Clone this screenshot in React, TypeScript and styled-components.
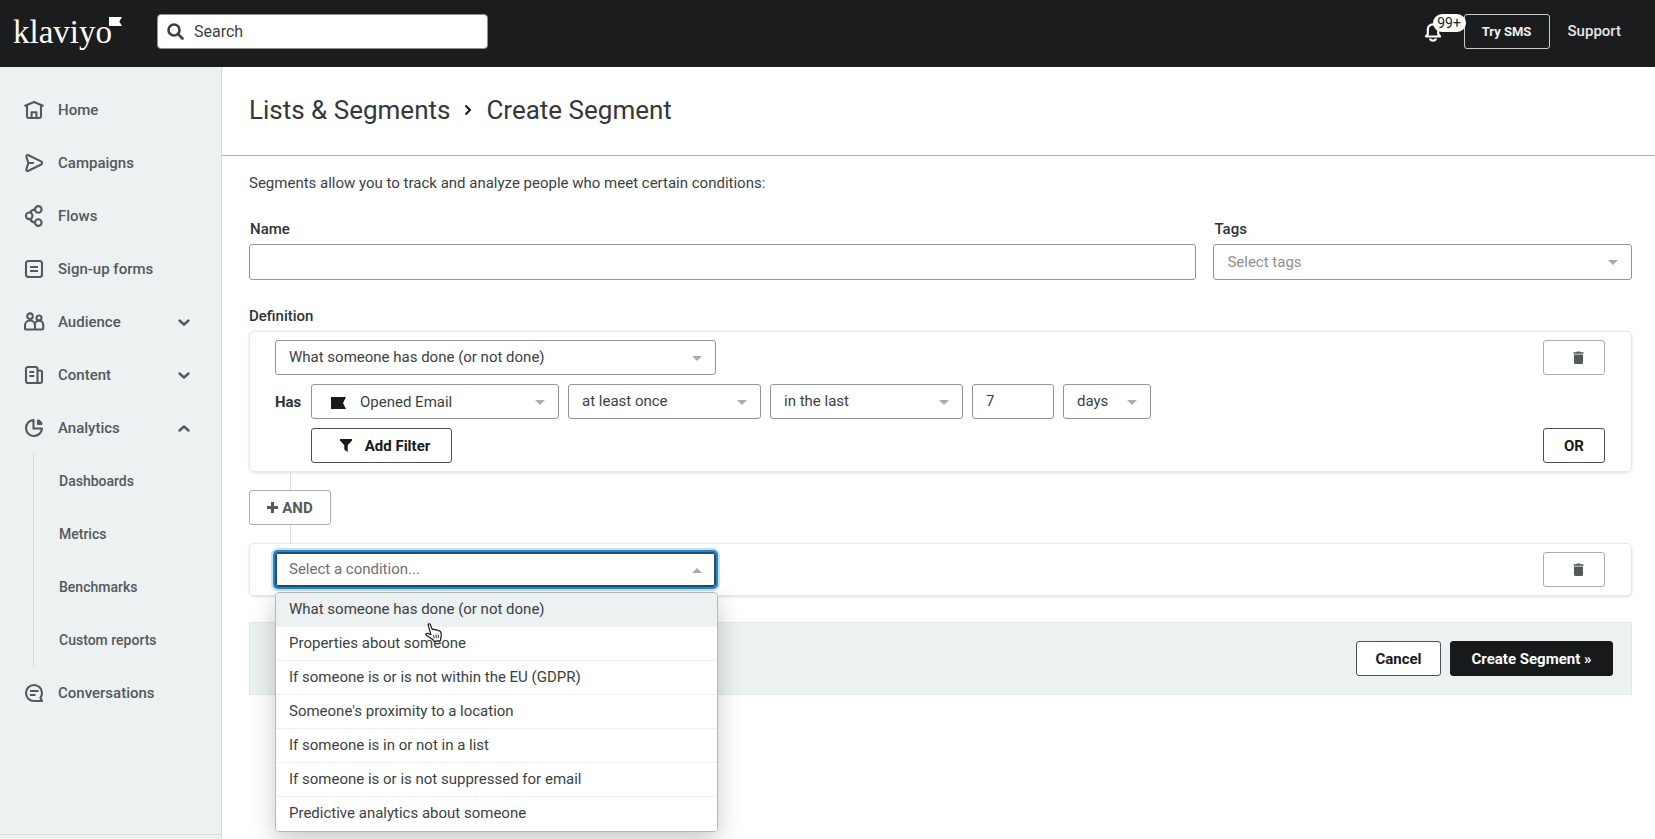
import React, { useState } from "react";
import styled, { createGlobalStyle, css } from "styled-components";

const GlobalStyle = createGlobalStyle`
  *, *::before, *::after { box-sizing: border-box; }
  body { margin: 0; background: #fff; }
  body, button, input, select {
    font-family: Roboto, "Liberation Sans", sans-serif;
    font-size: 15px;
    color: #3b3f42;
  }
`;

/* ---------- page frame ---------- */

const Page = styled.div`
  display: flex;
  flex-direction: column;
  min-height: 100vh;
`;

const TopBar = styled.header`
  display: flex;
  align-items: flex-start;
  height: 67px;
  padding: 14px 34px 0 13px;
  background: #1b1c1e;
`;

const Logo = styled.a`
  display: flex;
  align-items: flex-start;
  width: 144px;
  color: #fff;
  font-family: "Liberation Serif", serif;
  font-size: 33px;
  line-height: 36px;
  text-decoration: none;

  svg { margin: 3px 0 0 -3px; }
`;

const SearchBox = styled.label`
  display: flex;
  align-items: center;
  gap: 10px;
  flex: 0 1 331px;
  height: 35px;
  padding: 0 9px;
  border: 1px solid #8d9192;
  border-radius: 4px;
  background: #fff;
`;

const SearchInput = styled.input`
  flex: 1;
  min-width: 0;
  padding: 0;
  border: 0;
  outline: 0;
  background: none;
  font-size: 16px;

  &::placeholder { color: #3b3f42; opacity: 1; }
`;

const TopActions = styled.div`
  display: flex;
  margin-left: auto;
`;

const Bell = styled.button`
  position: relative;
  width: 40px;
  height: 35px;
  padding: 0;
  border: 0;
  background: none;
  text-align: left;

  svg { display: block; }
`;

const Badge = styled.span`
  position: absolute;
  top: 0;
  left: 9px;
  z-index: 1;
  width: 33px;
  border-radius: 9px;
  background: #fff;
  color: #1b1c1e;
  font-size: 14px;
  line-height: 18px;
  text-align: center;
`;

const SmsButton = styled.button`
  width: 86px;
  height: 35px;
  padding: 0;
  border: 1px solid #c9cbcc;
  border-radius: 3px;
  background: none;
  color: #f0f0f0;
  font-size: 13px;
  font-weight: 700;
`;

const SupportLink = styled.a`
  margin-left: 18px;
  color: #e4e5e6;
  font-size: 15px;
  font-weight: 500;
  line-height: 34px;
  text-decoration: none;
`;

const Body = styled.div`
  display: flex;
  flex: 1;
`;

/* ---------- sidebar ---------- */

const Sidebar = styled.nav`
  display: flex;
  flex-direction: column;
  flex: 0 0 222px;
  padding-top: 16px;
  border-right: 1px solid #d5dadb;
  background: #ecf1f2;
`;

const NavList = styled.ul`
  margin: 0;
  padding: 0;
  list-style: none;
`;

const navEntry = css`
  display: flex;
  align-items: center;
  width: 100%;
  height: 53px;
  border: 0;
  background: none;
  color: #54595c;
  font-weight: 500;
  text-align: left;
  text-decoration: none;
`;

const NavLink = styled.a`
  ${navEntry}
  gap: 13px;
  padding: 0 32px 0 23px;
  font-size: 15px;
`;

const NavToggle = styled.button`
  ${navEntry}
  gap: 13px;
  padding: 0 30px 0 23px;
  font-size: 15px;

  svg:last-child { margin-left: auto; }
`;

const SubList = styled(NavList)`
  margin-left: 33px;
  border-left: 1px solid #d5dadb;
`;

const SubLink = styled.a`
  ${navEntry}
  padding-left: 25px;
  font-size: 14px;
`;

const SidebarFoot = styled.div`
  height: 5px;
  margin-top: auto;
  border-top: 1px solid #d5dadb;
`;

/* ---------- main column ---------- */

const Main = styled.main`
  flex: 1;
  min-width: 0;
`;

const TitleBar = styled.div`
  display: flex;
  align-items: center;
  gap: 14px;
  height: 89px;
  padding: 0 27px 2px;
  border-bottom: 1px solid #b0b4b6;
`;

const Title = styled.h1`
  margin: 0;
  color: #33373a;
  font-size: 26px;
  font-weight: 400;
  line-height: 32px;

  a { color: inherit; text-decoration: none; }
`;

const Form = styled.form`
  padding: 17px 23px 24px 27px;
`;

const Intro = styled.p`
  margin: 0 0 26px;
  line-height: 20px;
`;

const FieldGrid = styled.div`
  display: grid;
  grid-template-columns: 43fr 19fr;
  gap: 17px;
  margin-bottom: 26px;
`;

const Field = styled.div`
  display: flex;
  flex-direction: column;
  gap: 5px;
`;

const Label = styled.label<{ $inset?: boolean }>`
  padding-left: ${(p) => (p.$inset ? 1 : 0)}px;
  color: #2f3336;
  font-weight: 500;
  line-height: 20px;
`;

const SectionLabel = styled.h2`
  margin: 0 0 5px;
  color: #2f3336;
  font-size: 15px;
  font-weight: 500;
  line-height: 20px;
`;

const control = css`
  display: block;
  width: 100%;
  height: 35px;
  padding: 0 14px 1px 13px;
  border: 1px solid #929697;
  border-radius: 3px;
  background: #fff;
  outline: 0;
`;

const TextInput = styled.input<{ $width?: number; $tall?: boolean }>`
  ${control}
  ${(p) => p.$width && css`width: ${p.$width}px;`}
  ${(p) => p.$tall && css`height: 36px;`}
`;

const SelectBox = styled.div<{ $width?: number; $open?: boolean }>`
  position: relative;
  width: ${(p) => (p.$width ? `${p.$width}px` : "100%")};
  max-width: 100%;

  &::after {
    content: "";
    position: absolute;
    top: 50%;
    right: 14px;
    border: 5px solid transparent;
    border-top-color: #a9adae;
    margin-top: -2px;
    pointer-events: none;
    ${(p) => p.$open && css`
      margin-top: -7px;
      border-top-color: transparent;
      border-bottom-color: #a9adae;
    `}
  }
`;

const Select = styled.select<{ $muted?: boolean; $tall?: boolean; $icon?: boolean; $open?: boolean }>`
  ${control}
  appearance: none;
  color: ${(p) => (p.$muted ? "#8d9192" : "#3b3f42")};
  ${(p) => p.$tall && css`height: 36px;`}
  ${(p) => p.$icon && css`padding: 1px 14px 0 48px;`}
  ${(p) => p.$open && css`
    border-color: #1c4f72;
    color: #6c7173;
    box-shadow: inset 0 0 0 1px #1c4f72, 0 0 0 2px #2d85bd, 0 0 0 4px #c3e3f5;
  `}
`;

const SelectIcon = styled.span`
  position: absolute;
  top: 13px;
  left: 20px;
  pointer-events: none;

  svg { display: block; }
`;

const Card = styled.section`
  display: flex;
  flex-direction: column;
  gap: 9px;
  padding: 8px 26px 8px 25px;
  border: 1px solid #e6e9ea;
  border-radius: 5px;
  box-shadow: 0 1px 3px rgba(0, 0, 0, 0.12);
`;

const Row = styled.div`
  display: flex;
  align-items: center;
  gap: 9px;
`;

const Verb = styled.span`
  width: 27px;
  color: #2f3336;
  font-weight: 700;
`;

const Spacer = styled.div`
  flex: 1;
`;

const Indent = styled.div`
  width: 27px;
`;

const Button = styled.button<{ $width: number; $tone?: "quiet" | "solid" }>`
  display: flex;
  align-items: center;
  justify-content: center;
  flex: 0 0 ${(p) => p.$width}px;
  width: ${(p) => p.$width}px;
  height: 35px;
  padding: 0;
  border: 1px solid #4b4f51;
  border-radius: 3px;
  background: #fff;
  color: #17191b;
  font-weight: 700;
  white-space: nowrap;

  ${(p) => p.$tone === "quiet" && css`
    border-color: #aaaeaf;
    color: #54595c;
  `}
  ${(p) => p.$tone === "solid" && css`
    border-color: #17191b;
    background: #17191b;
    color: #fff;
  `}
`;

const FilterButton = styled(Button)`
  gap: 13px;
  padding-left: 7px;
`;

const AndButton = styled(Button)`
  gap: 4px;
`;

const TrashButton = styled(Button)`
  padding-left: 9px;
`;

const Stub = styled.div`
  width: 1px;
  height: 18px;
  margin-left: 41px;
  background: #dcdfe0;
`;

const Menu = styled.ul`
  position: absolute;
  top: 40px;
  left: 0;
  z-index: 2;
  width: 443px;
  margin: 0;
  padding: 0;
  border: 1px solid #b3b8b9;
  border-radius: 4px;
  background: #fff;
  box-shadow: 0 8px 24px rgba(0, 0, 0, 0.22);
  list-style: none;
  overflow: hidden;
`;

const MenuItem = styled.li<{ $active: boolean }>`
  height: 34px;
  padding: 0 13px;
  border-bottom: 1px solid #eef0f1;
  background: ${(p) => (p.$active ? "#ecf1f2" : "#fff")};
  line-height: 33px;
  cursor: pointer;

  &:last-child { border-bottom: 0; }
`;

const Pointer = styled.svg`
  position: absolute;
  top: 71px;
  left: 150px;
  z-index: 3;
  pointer-events: none;
`;

const Footer = styled.div`
  display: flex;
  justify-content: flex-end;
  gap: 9px;
  margin-top: 26px;
  padding: 18px;
  border: 1px solid #e1e6e7;
  background: #ecf1f2;
`;

/* ---------- icons ---------- */

const iconPaths = {
  home: (
    <>
      <path d="M1.500 7 11 3l9.500 4M4 6.500V17a2 2 0 0 0 2 2h10a2 2 0 0 0 2-2V6.500" />
      <path d="M8.600 19v-5.800h4.800V19" />
    </>
  ),
  campaigns: (
    <path d="M5.400 11 3.400 5.200C2.900 3.500 4 2.500 5.500 3.200l12.600 6.200c1.300.7 1.300 2.400 0 3.100L5.500 18.800c-1.500.7-2.600-.4-2.100-2L5.400 11h5.400" />
  ),
  flows: (
    <>
      <circle cx="15.300" cy="4.400" r="3.300" />
      <circle cx="6.200" cy="10.800" r="3.300" />
      <circle cx="15.300" cy="17.600" r="3.300" />
      <path d="M7.200 7.600C8 5.600 9.600 4.600 12 4.400M7.200 14c.8 2 2.400 3.300 4.800 3.600" />
    </>
  ),
  forms: (
    <>
      <rect x="3" y="3" width="16" height="16" rx="2.500" />
      <path d="M7 9h8M7 13h8" />
    </>
  ),
  audience: (
    <>
      <circle cx="7" cy="5.200" r="2.800" />
      <circle cx="16" cy="7" r="2.500" />
      <path d="M12 18.500H3a1 1 0 0 1-1-1v-3a5 5 0 0 1 10 0ZM12 18.500h7.200a1 1 0 0 0 1-1V14a4 4 0 0 0-8.200-.5" />
    </>
  ),
  content: (
    <>
      <path d="M14.500 19H5a2 2 0 0 1-2-2V5a2 2 0 0 1 2-2h7.500a2 2 0 0 1 2 2v14ZM14.500 6.500H17a2 2 0 0 1 2 2V17a2 2 0 0 1-2 2h-2.500" />
      <path d="M6.300 8h5M6.300 12h5" />
    </>
  ),
  analytics: (
    <>
      <path d="M10.500 3A8 8 0 1 0 19 11.500h-8.500V3Z" />
      <path d="M15 3.500A4.500 4.500 0 0 1 18.500 7H15Z" fill="currentColor" />
    </>
  ),
  conversations: (
    <>
      <path d="M19 19h-8a8 8 0 1 1 8-8c0 2.300-.9 4-1.600 5Z" />
      <path d="M7 9h8.500M7 13h5.500" />
    </>
  ),
};

type IconName = keyof typeof iconPaths;

const NavIcon = ({ name }: { name: IconName }) => (
  <svg width="22" height="22" viewBox="0 0 22 22" fill="none" stroke="currentColor" strokeWidth="2.100" strokeLinejoin="round" aria-hidden="true">
    {iconPaths[name]}
  </svg>
);

const Chevron = ({ up }: { up?: boolean }) => (
  <svg width="14" height="14" viewBox="0 0 14 14" fill="none" stroke="currentColor" strokeWidth="2.400" strokeLinecap="round" strokeLinejoin="round" aria-hidden="true">
    <path d={up ? "M2.500 9.500 7 5.500l4.500 4" : "M2.500 5.500 7 9.500l4.500-4"} />
  </svg>
);

const TrashIcon = () => (
  <svg width="11" height="13" viewBox="0 0 11 13" fill="currentColor" aria-hidden="true">
    <path d="M1 3.600h9v7.900A1.500 1.500 0 0 1 8.500 13h-6A1.500 1.500 0 0 1 1 11.500ZM.5 1.300h2.800L4 .5h3l.7.800h2.800v1.500H.5Z" />
  </svg>
);

/* ---------- data ---------- */

const navItems: { name: IconName; label: string; toggle?: "open" | "closed"; children?: string[] }[] = [
  { name: "home", label: "Home" },
  { name: "campaigns", label: "Campaigns" },
  { name: "flows", label: "Flows" },
  { name: "forms", label: "Sign-up forms" },
  { name: "audience", label: "Audience", toggle: "closed" },
  { name: "content", label: "Content", toggle: "closed" },
  { name: "analytics", label: "Analytics", toggle: "open", children: ["Dashboards", "Metrics", "Benchmarks", "Custom reports"] },
  { name: "conversations", label: "Conversations" },
];

const conditions = [
  "What someone has done (or not done)",
  "Properties about someone",
  "If someone is or is not within the EU (GDPR)",
  "Someone's proximity to a location",
  "If someone is in or not in a list",
  "If someone is or is not suppressed for email",
  "Predictive analytics about someone",
];

export default function App() {
  const [active, setActive] = useState(0);
  const [days, setDays] = useState("7");

  return (
    <Page>
      <GlobalStyle />
      <TopBar>
        <Logo href="#">
          klaviyo
          <svg width="13" height="9" viewBox="0 0 13 9" fill="currentColor" aria-hidden="true">
            <path d="M0 0h13l-2.700 4.500L13 9H0Z" />
          </svg>
        </Logo>
        <SearchBox>
          <svg width="17" height="17" viewBox="0 0 17 17" fill="none" stroke="#3b3f42" strokeWidth="2.600" strokeLinecap="round" aria-hidden="true">
            <circle cx="7" cy="7" r="5.500" />
            <path d="m11.300 11.300 4.200 4.200" />
          </svg>
          <SearchInput type="search" placeholder="Search" aria-label="Search" />
        </SearchBox>
        <TopActions>
          <Bell type="button" aria-label="Notifications">
            <svg width="18" height="35" viewBox="0 0 18 35" fill="none" stroke="#fff" strokeWidth="2.200" strokeLinejoin="round" aria-hidden="true">
              <path d="M3.800 20v-4.500a5.200 5.200 0 0 1 10.400 0V20l1.800 2.500H2ZM6 24.500c.7 2.800 5.300 2.800 6 0" />
            </svg>
            <Badge>99+</Badge>
          </Bell>
          <SmsButton type="button">Try SMS</SmsButton>
          <SupportLink href="#">Support</SupportLink>
        </TopActions>
      </TopBar>

      <Body>
        <Sidebar aria-label="Main">
          <NavList>
            {navItems.map((item) => (
              <li key={item.label}>
                {item.toggle ? (
                  <NavToggle type="button" aria-expanded={item.toggle === "open"}>
                    <NavIcon name={item.name} />
                    {item.label}
                    <Chevron up={item.toggle === "open"} />
                  </NavToggle>
                ) : (
                  <NavLink href="#">
                    <NavIcon name={item.name} />
                    {item.label}
                  </NavLink>
                )}
                {item.children && (
                  <SubList>
                    {item.children.map((child) => (
                      <li key={child}>
                        <SubLink href="#">{child}</SubLink>
                      </li>
                    ))}
                  </SubList>
                )}
              </li>
            ))}
          </NavList>
          <SidebarFoot />
        </Sidebar>

        <Main>
          <TitleBar>
            <Title as="div">
              <a href="#">Lists &amp; Segments</a>
            </Title>
            <svg width="8" height="12" viewBox="0 0 8 12" fill="none" stroke="#17191b" strokeWidth="2" aria-hidden="true">
              <path d="m1.500 1.500 4.500 4.500-4.500 4.500" />
            </svg>
            <Title>Create Segment</Title>
          </TitleBar>

          <Form onSubmit={(e) => e.preventDefault()}>
            <Intro>Segments allow you to track and analyze people who meet certain conditions:</Intro>

            <FieldGrid>
              <Field>
                <Label htmlFor="name" $inset>Name</Label>
                <TextInput id="name" type="text" $tall />
              </Field>
              <Field>
                <Label htmlFor="tags" $inset>Tags</Label>
                <SelectBox>
                  <Select id="tags" $muted $tall>
                    <option>Select tags</option>
                  </Select>
                </SelectBox>
              </Field>
            </FieldGrid>

            <SectionLabel>Definition</SectionLabel>
            <Card>
              <Row>
                <SelectBox $width={441}>
                  <Select aria-label="Condition">
                    {conditions.map((c) => <option key={c}>{c}</option>)}
                  </Select>
                </SelectBox>
                <Spacer />
                <TrashButton type="button" $width={62} $tone="quiet" aria-label="Delete condition">
                  <TrashIcon />
                </TrashButton>
              </Row>
              <Row>
                <Verb>Has</Verb>
                <SelectBox $width={248}>
                  <Select aria-label="Metric" $icon>
                    <option>Opened Email</option>
                  </Select>
                  <SelectIcon>
                    <svg width="15" height="12" viewBox="0 0 15 12" fill="#17191b" aria-hidden="true">
                      <path d="M0 0h15l-3 6 3 6H0Z" />
                    </svg>
                  </SelectIcon>
                </SelectBox>
                <SelectBox $width={193}>
                  <Select aria-label="Frequency"><option>at least once</option></Select>
                </SelectBox>
                <SelectBox $width={193}>
                  <Select aria-label="Period"><option>in the last</option></Select>
                </SelectBox>
                <TextInput type="text" aria-label="Amount" $width={82} value={days} onChange={(e) => setDays(e.target.value)} />
                <SelectBox $width={88}>
                  <Select aria-label="Unit"><option>days</option></Select>
                </SelectBox>
              </Row>
              <Row>
                <Indent />
                <FilterButton type="button" $width={141}>
                  <svg width="12" height="13" viewBox="0 0 12 13" fill="currentColor" aria-hidden="true">
                    <path d="M0 0h12v1.500L7.700 6.300V13L4.300 10.500V6.300L0 1.500Z" />
                  </svg>
                  Add Filter
                </FilterButton>
                <Spacer />
                <Button type="button" $width={62}>OR</Button>
              </Row>
            </Card>

            <Stub />
            <AndButton type="button" $width={82} $tone="quiet">
              <svg width="11" height="11" viewBox="0 0 11 11" stroke="currentColor" strokeWidth="3" aria-hidden="true">
                <path d="M5.500 0v11M0 5.500h11" />
              </svg>
              AND
            </AndButton>
            <Stub />

            <Card>
              <Row>
                <SelectBox $width={441} $open>
                  <Select aria-label="New condition" $open>
                    <option>Select a condition...</option>
                  </Select>
                  <Menu role="listbox" aria-label="Conditions">
                    {conditions.map((c, i) => (
                      <MenuItem key={c} role="option" aria-selected={i === active} $active={i === active} onMouseEnter={() => setActive(i)}>
                        {c}
                      </MenuItem>
                    ))}
                  </Menu>
                  <Pointer width="18" height="20" viewBox="0 0 18 20" fill="#fff" stroke="#17191b" strokeWidth="1.200" strokeLinejoin="round" aria-hidden="true">
                    <path d="M3.200 2.200c-.4-1.500 1.600-2 2.200-.6l1.900 5c.6-.7 1.800-.6 2.200.2.700-.5 1.700-.3 2.100.5.900-.4 1.900 0 2.200.7 1-.2 1.700.4 2 1.300.5 1.600.6 3.800 0 5.400l-.3 2.800-6.500.8-.8-1.300C6.500 15.500 4.200 14.200 1.300 12.200c-1-.9 0-2.200 1.500-1.700l3.100 1.100Z" />
                    <path d="m8.600 12 .5 3.500M10.900 11.700l.4 3.500M13.100 11.400l.3 3.500" strokeWidth="0.900" />
                  </Pointer>
                </SelectBox>
                <Spacer />
                <TrashButton type="button" $width={62} $tone="quiet" aria-label="Delete new condition">
                  <TrashIcon />
                </TrashButton>
              </Row>
            </Card>

            <Footer>
              <Button type="button" $width={85}>Cancel</Button>
              <Button type="submit" $width={163} $tone="solid">Create Segment »</Button>
            </Footer>
          </Form>
        </Main>
      </Body>
    </Page>
  );
}
